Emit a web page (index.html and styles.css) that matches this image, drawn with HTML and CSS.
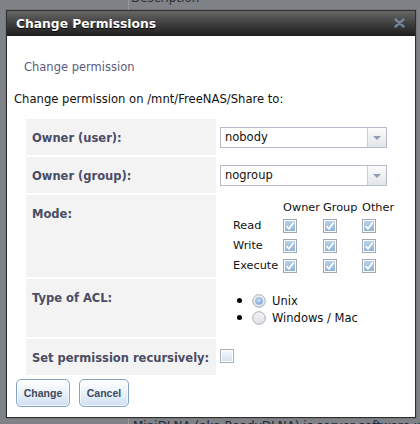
FILE: index.html
```html
<!DOCTYPE html>
<html>
<head>
<meta charset="utf-8">
<link rel="stylesheet" href="styles.css">
</head>
<body>
<svg class="defs" width="0" height="0" aria-hidden="true">
  <defs>
    <linearGradient id="cbfill" x1="0" y1="0" x2="0" y2="1">
      <stop offset="0" stop-color="#b9d2e9"/>
      <stop offset="1" stop-color="#8db3d8"/>
    </linearGradient>
    <linearGradient id="cbempty" x1="0" y1="0" x2="0" y2="1">
      <stop offset="0" stop-color="#f4f7fa"/>
      <stop offset="1" stop-color="#d5e2ef"/>
    </linearGradient>
    <linearGradient id="rdfill" x1="0" y1="0" x2="0" y2="1">
      <stop offset="0" stop-color="#f2f2f2"/>
      <stop offset="1" stop-color="#e0e3e7"/>
    </linearGradient>
    <radialGradient id="rddot" cx="0.45" cy="0.4" r="0.6">
      <stop offset="0" stop-color="#d6e8f7"/>
      <stop offset="1" stop-color="#6fa6d6"/>
    </radialGradient>
  </defs>
</svg>

<div class="page">
  <div class="pcell c1"></div>
  <div class="pcell c2"><span class="head-text">Description</span></div>
  <div class="pcell c1"></div>
  <div class="pcell c2"></div>
  <div class="pcell c1"></div>
  <div class="pcell c2"><span class="foot-text">MiniDLNA (aka ReadyDLNA) is server software with</span></div>
</div>

<div class="dialog">
  <div class="titlebar">
    <span class="title">Change Permissions</span>
    <svg class="close" width="11" height="10" viewBox="0 0 11 10">
      <path d="M1.5 1.5 L9.5 8.5 M9.5 1.5 L1.5 8.5" stroke="#72869b" stroke-width="2.4" stroke-linecap="round"/>
    </svg>
  </div>
  <div class="body">
    <div class="subtitle">Change permission</div>
    <div class="intro">Change permission on /mnt/FreeNAS/Share to:</div>

    <div class="form">
      <div class="label">Owner (user):</div>
      <div class="field sel-field">
        <div class="select"><span class="sel-text">nobody</span><span class="arrow"><span class="tri"></span></span></div>
      </div>

      <div class="label">Owner (group):</div>
      <div class="field sel-field">
        <div class="select"><span class="sel-text">nogroup</span><span class="arrow"><span class="tri"></span></span></div>
      </div>

      <div class="label">Mode:</div>
      <div class="field mode-field">
        <div class="mode">
          <span></span><span class="mh">Owner</span><span class="mh">Group</span><span class="mh">Other</span>

          <span class="ml">Read</span>
          <svg class="cb" width="14" height="14" viewBox="0 0 14 14"><rect x="0.5" y="0.5" width="13" height="13" fill="#fff" stroke="#a3a9b1"/><rect x="2" y="2" width="10" height="10" fill="url(#cbfill)"/><path d="M3.6 7.2 L6 9.8 L10.6 3.6" fill="none" stroke="#fff" stroke-width="1.7"/></svg>
          <svg class="cb" width="14" height="14" viewBox="0 0 14 14"><rect x="0.5" y="0.5" width="13" height="13" fill="#fff" stroke="#a3a9b1"/><rect x="2" y="2" width="10" height="10" fill="url(#cbfill)"/><path d="M3.6 7.2 L6 9.8 L10.6 3.6" fill="none" stroke="#fff" stroke-width="1.7"/></svg>
          <svg class="cb" width="14" height="14" viewBox="0 0 14 14"><rect x="0.5" y="0.5" width="13" height="13" fill="#fff" stroke="#a3a9b1"/><rect x="2" y="2" width="10" height="10" fill="url(#cbfill)"/><path d="M3.6 7.2 L6 9.8 L10.6 3.6" fill="none" stroke="#fff" stroke-width="1.7"/></svg>

          <span class="ml">Write</span>
          <svg class="cb" width="14" height="14" viewBox="0 0 14 14"><rect x="0.5" y="0.5" width="13" height="13" fill="#fff" stroke="#a3a9b1"/><rect x="2" y="2" width="10" height="10" fill="url(#cbfill)"/><path d="M3.6 7.2 L6 9.8 L10.6 3.6" fill="none" stroke="#fff" stroke-width="1.7"/></svg>
          <svg class="cb" width="14" height="14" viewBox="0 0 14 14"><rect x="0.5" y="0.5" width="13" height="13" fill="#fff" stroke="#a3a9b1"/><rect x="2" y="2" width="10" height="10" fill="url(#cbfill)"/><path d="M3.6 7.2 L6 9.8 L10.6 3.6" fill="none" stroke="#fff" stroke-width="1.7"/></svg>
          <svg class="cb" width="14" height="14" viewBox="0 0 14 14"><rect x="0.5" y="0.5" width="13" height="13" fill="#fff" stroke="#a3a9b1"/><rect x="2" y="2" width="10" height="10" fill="url(#cbfill)"/><path d="M3.6 7.2 L6 9.8 L10.6 3.6" fill="none" stroke="#fff" stroke-width="1.7"/></svg>

          <span class="ml">Execute</span>
          <svg class="cb" width="14" height="14" viewBox="0 0 14 14"><rect x="0.5" y="0.5" width="13" height="13" fill="#fff" stroke="#a3a9b1"/><rect x="2" y="2" width="10" height="10" fill="url(#cbfill)"/><path d="M3.6 7.2 L6 9.8 L10.6 3.6" fill="none" stroke="#fff" stroke-width="1.7"/></svg>
          <svg class="cb" width="14" height="14" viewBox="0 0 14 14"><rect x="0.5" y="0.5" width="13" height="13" fill="#fff" stroke="#a3a9b1"/><rect x="2" y="2" width="10" height="10" fill="url(#cbfill)"/><path d="M3.6 7.2 L6 9.8 L10.6 3.6" fill="none" stroke="#fff" stroke-width="1.7"/></svg>
          <svg class="cb" width="14" height="14" viewBox="0 0 14 14"><rect x="0.5" y="0.5" width="13" height="13" fill="#fff" stroke="#a3a9b1"/><rect x="2" y="2" width="10" height="10" fill="url(#cbfill)"/><path d="M3.6 7.2 L6 9.8 L10.6 3.6" fill="none" stroke="#fff" stroke-width="1.7"/></svg>
        </div>
      </div>

      <div class="label">Type of ACL:</div>
      <div class="field acl-field">
        <ul class="acl">
          <li><svg class="rd" width="14" height="14" viewBox="0 0 14 14"><circle cx="7" cy="7" r="6.3" fill="url(#rdfill)" stroke="#a7adb5"/><circle cx="7" cy="7" r="3.6" fill="url(#rddot)" stroke="#8fb6dc" stroke-width="0.6"/></svg><span>Unix</span></li>
          <li><svg class="rd" width="14" height="14" viewBox="0 0 14 14"><circle cx="7" cy="7" r="6.3" fill="url(#rdfill)" stroke="#a7adb5"/></svg><span>Windows / Mac</span></li>
        </ul>
      </div>

      <div class="label">Set permission recursively:</div>
      <div class="field rec-field">
        <svg class="cb" width="14" height="14" viewBox="0 0 14 14"><rect x="0.5" y="0.5" width="13" height="13" fill="#fff" stroke="#a9afb7"/><rect x="2" y="2" width="10" height="10" fill="url(#cbempty)"/></svg>
      </div>
    </div>

    <div class="buttons">
      <button class="btn btn-change">Change</button>
      <button class="btn btn-cancel">Cancel</button>
    </div>
  </div>
</div>
</body>
</html>
```

FILE: styles.css
```css
html, body {
  margin: 0;
  padding: 0;
}

body {
  width: 420px;
  height: 424px;
  overflow: hidden;
  position: relative;
  background: #7f8286;
  font-family: "DejaVu Sans", "Liberation Sans", sans-serif;
}

.defs {
  position: absolute;
  width: 0;
  height: 0;
}

/* faded page behind the modal */
.page {
  display: grid;
  grid-template-columns: 128px 1fr;
  grid-template-rows: 10px 408px 6px;
  height: 424px;
}

.pcell.c2 {
  border-left: 1px solid #96999d;
  overflow: hidden;
}

.head-text {
  display: block;
  margin-top: -9px;
  padding-left: 2px;
  font-size: 12px;
  line-height: 14px;
  color: #2c2e33;
  white-space: nowrap;
}

.foot-text {
  display: block;
  padding-left: 4px;
  margin-top: 1px;
  font-size: 12px;
  line-height: 14px;
  color: #26283a;
  white-space: nowrap;
}

/* dialog */
.dialog {
  position: absolute;
  left: 6px;
  top: 10px;
  width: 410px;
  height: 408px;
  box-sizing: border-box;
  border: 1px solid #2e2e2e;
  background: #fff;
  box-shadow: 0 0 1px rgba(0, 0, 0, 0.5);
}

.titlebar {
  height: 25px;
  display: flex;
  align-items: center;
  justify-content: space-between;
  padding: 0 10px 0 9px;
  background: linear-gradient(#676767, #3c3c3c 55%, #242424 90%, #1b1b1b);
}

.title {
  color: #fff;
  font-weight: bold;
  font-size: 12.3px;
  line-height: 16px;
  margin-top: 1px;
  text-shadow: 0 1px 0 #000;
}

.close {
  display: block;
  margin-top: -1px;
}

.subtitle {
  margin-top: 23px;
  padding-left: 17px;
  font-size: 11.5px;
  line-height: 16px;
  color: #5c5c7c;
}

.intro {
  margin-top: 16px;
  padding-left: 7px;
  font-size: 11.6px;
  line-height: 16px;
  color: #111;
}

.form {
  margin: 12px 0 0 19px;
  display: grid;
  grid-template-columns: 190px 173px;
  grid-template-rows: 36px 36px 82px 58px 36px;
  column-gap: 1px;
  row-gap: 2px;
}

.label {
  background: #f3f3f3;
  padding: 12px 0 0 6px;
  font-size: 11.5px;
  font-weight: bold;
  line-height: 14px;
  color: #4a4c64;
  white-space: nowrap;
}

.field {
  background: #fff;
}

.sel-field {
  padding: 8px 0 0 3px;
}

.select {
  width: 167px;
  height: 21px;
  box-sizing: border-box;
  border: 1px solid #b6bdc8;
  display: flex;
  align-items: stretch;
  background: #fff;
}

.sel-text {
  flex: 1;
  padding-left: 4px;
  font-size: 11.5px;
  line-height: 19px;
  color: #111;
}

.arrow {
  width: 18px;
  border-left: 1px solid #c9ced6;
  background: linear-gradient(#fbfbfb, #e2e5e9);
  display: flex;
  align-items: center;
  justify-content: center;
}

.tri {
  width: 0;
  height: 0;
  border-left: 4px solid transparent;
  border-right: 4px solid transparent;
  border-top: 4px solid #8e9db3;
}

.mode-field {
  padding: 5px 0 0 16px;
}

.mode {
  display: grid;
  grid-template-columns: 50px 40px 39px 36px;
  grid-template-rows: 16px 20px 20px 20px;
  align-items: center;
  font-size: 11.3px;
  color: #111;
}

.mh {
  line-height: 16px;
  white-space: nowrap;
}

.ml {
  line-height: 16px;
}

.cb {
  display: block;
}

.acl-field {
  padding-top: 13px;
}

.acl {
  list-style: none;
  margin: 0;
  padding: 0 0 0 20px;
  font-size: 11.5px;
  color: #111;
}

.acl li {
  display: flex;
  align-items: center;
  height: 17px;
}

.acl li::before {
  content: "";
  width: 5px;
  height: 5px;
  border-radius: 50%;
  background: #000;
  margin-right: 10px;
}

.rd {
  display: block;
  margin-right: 6px;
}

.rec-field {
  padding: 10px 0 0 3px;
}

.buttons {
  display: flex;
  gap: 9px;
  margin: 4px 0 0 9px;
}

.btn {
  height: 28px;
  box-sizing: border-box;
  border: 1px solid #84a3c7;
  border-radius: 5px;
  background: linear-gradient(#ffffff, #e9f1fa 50%, #cfe0f3);
  box-shadow: inset 0 0 0 1px rgba(255, 255, 255, 0.7);
  font-family: "Liberation Sans", Arial, sans-serif;
  font-weight: bold;
  font-size: 10.5px;
  color: #3d4a5c;
  padding: 0;
  cursor: pointer;
}

.btn-change {
  width: 54px;
}

.btn-cancel {
  width: 50px;
}
```
